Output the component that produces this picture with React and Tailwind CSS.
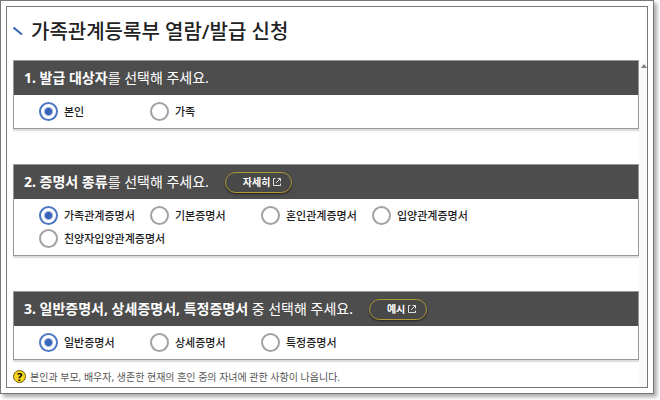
import React from "react";

function ExternalIcon() {
  return (
    <svg className="h-2 w-2" viewBox="0 0 8 8" fill="none" stroke="#e0e0e0" aria-hidden="true">
      <path d="M2.5 0.5H0.5V7.5H7.5V5.5" />
      <path d="M4.5 0.5H7.5V3.5M7.5 0.5L3 5" />
    </svg>
  );
}

function PillButton({ children }) {
  return (
    <button
      type="button"
      className="flex h-[21px] items-center gap-[3px] rounded-full border border-[#b49a35] bg-[#484848] pr-[10px] pl-[17px] text-[10px] leading-4 font-bold text-white shadow-[0_1px_2px_#222]"
    >
      {children}
      <ExternalIcon />
    </button>
  );
}

function Radio({ name, label, checked }) {
  return (
    <label className="flex h-[23px] items-center gap-[6px] text-[11px] leading-4 font-medium whitespace-nowrap text-[#1c1c1c]">
      <input
        type="radio"
        name={name}
        defaultChecked={checked}
        className="h-[19px] w-[19px] shrink-0 appearance-none rounded-full border-2 border-[#a2a2a2] bg-white checked:border-[#4c79c4] checked:bg-[radial-gradient(circle,#3465b8_0_3px,#fff_5px)]"
      />
      {label}
    </label>
  );
}

function Section({ number, strong, rest, action, name, options }) {
  return (
    <section className="border border-[#999] bg-white shadow-[0_2px_1px_#ddd]">
      <header className="flex h-[34px] items-center gap-[16px] bg-[#4d4d4d] pl-[10px] text-white">
        <h2 className="text-[14px] leading-5 whitespace-nowrap">
          <strong className="font-bold">
            {number}. {strong}
          </strong>
          {rest}
        </h2>
        {action && <PillButton>{action}</PillButton>}
      </header>
      <div className="grid grid-cols-[repeat(auto-fill,111px)] py-[5px] pr-[120px] pl-[25px]">
        {options.map((label, i) => (
          <Radio key={label} name={name} label={label} checked={i === 0} />
        ))}
      </div>
    </section>
  );
}

export default function App() {
  return (
    <div className="bg-white pr-[6px] pb-[6px] font-['Noto_Sans','Noto_Sans_CJK_KR',sans-serif]">
      <div className="border border-[#777] bg-white p-[5px] shadow-[3px_3px_4px_#aaa]">
        <main className="border border-[#777] pl-[6px]">
          <div className="flex h-[53px] items-center gap-[8px] pb-[3px]">
            <svg className="h-[10px] w-[10px]" viewBox="0 0 10 10" fill="none" aria-hidden="true">
              <path d="M0.5 0.5L9 7.5" stroke="#3565b5" strokeWidth="2" />
            </svg>
            <h1 className="text-[20px] leading-7 font-medium text-[#222]">가족관계등록부 열람/발급 신청</h1>
          </div>
          <div className="flex">
            <div className="min-w-0 flex-1">
              <div className="flex flex-col gap-[35px]">
                <Section
                  number={1}
                  strong="발급 대상자"
                  rest="를 선택해 주세요."
                  name="target"
                  options={["본인", "가족"]}
                />
                <Section
                  number={2}
                  strong="증명서 종류"
                  rest="를 선택해 주세요."
                  action="자세히"
                  name="certificate"
                  options={["가족관계증명서", "기본증명서", "혼인관계증명서", "입양관계증명서", "친양자입양관계증명서"]}
                />
                <Section
                  number={3}
                  strong="일반증명서, 상세증명서, 특정증명서"
                  rest=" 중 선택해 주세요."
                  action="예시"
                  name="type"
                  options={["일반증명서", "상세증명서", "특정증명서"]}
                />
              </div>
              <p className="flex h-[27px] items-center gap-[4px] pt-[6px] text-[10px] leading-4 text-[#555]">
                <span className="flex h-[13px] w-[13px] items-center justify-center rounded-full border border-[#6b5a10] bg-[#f7d51c] text-[11px] font-bold text-black">
                  ?
                </span>
                본인과 부모, 배우자, 생존한 현재의 혼인 중의 자녀에 관한 사항이 나옵니다.
              </p>
            </div>
            <div className="w-[8px] bg-[#fafafa] pt-[4px] pl-[2px]">
              <svg className="h-[4px] w-[6px]" viewBox="0 0 6 4" aria-hidden="true">
                <path d="M3 0L6 4H0Z" fill="#808080" />
              </svg>
            </div>
          </div>
        </main>
      </div>
    </div>
  );
}
